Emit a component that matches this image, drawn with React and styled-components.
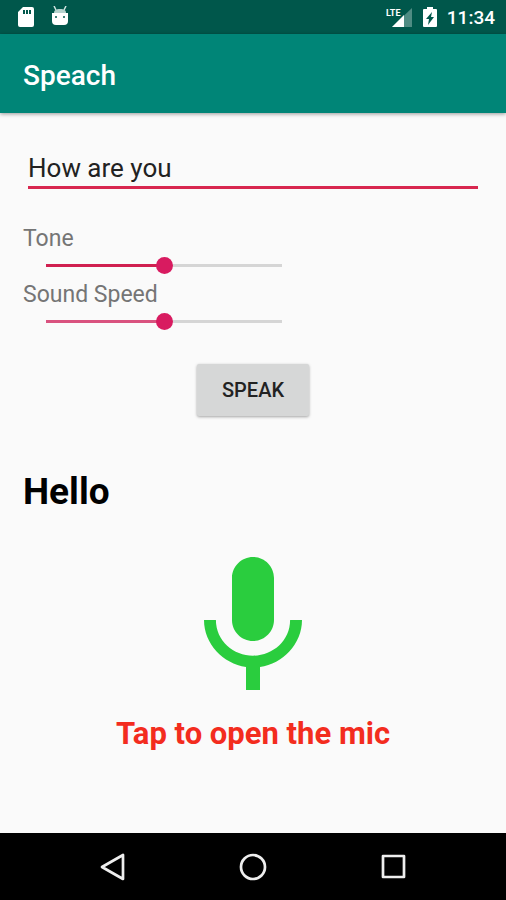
import React, { useState } from "react";
import styled, { createGlobalStyle } from "styled-components";

const GlobalStyle = createGlobalStyle`
  * {
    box-sizing: border-box;
  }

  body {
    margin: 0;
    background-color: #fafafa;
    font-family: Roboto, "Liberation Sans", sans-serif;
  }

  button {
    padding: 0;
    border: none;
    background: none;
    font-family: inherit;
    cursor: pointer;
  }
`;

const Screen = styled.div`
  display: flex;
  flex-direction: column;
  min-height: 100vh;
`;

const StatusBar = styled.div`
  display: flex;
  justify-content: space-between;
  align-items: center;
  height: 34px;
  padding: 0 11px 0 17px;
  background-color: #00574b;
  color: #fff;
`;

const StatusGroup = styled.div`
  display: flex;
  align-items: center;
  gap: ${({ $gap }) => $gap}px;
`;

const Clock = styled.time`
  font-size: 19px;
  line-height: 24px;
  font-weight: 500;
  padding-top: 2px;
`;

const AppBar = styled.header`
  display: flex;
  align-items: center;
  height: 79px;
  padding: 4px 23px 0;
  background-color: #008577;
  box-shadow: 0 1px 4px rgba(0, 0, 0, 0.4);
`;

const Title = styled.h1`
  margin: 0;
  color: #fff;
  font-size: 28px;
  line-height: 32px;
  font-weight: 500;
`;

const Content = styled.main`
  display: flex;
  flex-direction: column;
  flex: 1;
  padding: 36px 23px 24px;
`;

const PhraseInput = styled.input`
  height: 40px;
  margin: 0 5px 36px;
  padding: 0;
  border: none;
  border-bottom: 3px solid #d8274f;
  border-radius: 0;
  outline: none;
  background: transparent;
  color: #222;
  font-family: inherit;
  font-size: 26px;
`;

const Sliders = styled.div`
  display: flex;
  flex-direction: column;
  gap: 3px;
`;

const SliderField = styled.div`
  display: flex;
  flex-direction: column;
`;

const SliderLabel = styled.label`
  color: #757575;
  font-size: 23px;
  line-height: 28px;
`;

const Slider = styled.input`
  appearance: none;
  width: 236px;
  height: 25px;
  margin: 0 0 0 23px;
  background: transparent;
  cursor: pointer;

  &::-webkit-slider-runnable-track {
    height: 3px;
    background: linear-gradient(
      to right,
      ${({ $fill }) => $fill} ${({ value }) => value}%,
      #d5d5d5 ${({ value }) => value}%
    );
  }

  &::-webkit-slider-thumb {
    appearance: none;
    width: 17px;
    height: 17px;
    margin-top: -7px;
    border-radius: 50%;
    background-color: #d81b60;
  }
`;

const SpeakButton = styled.button`
  && {
    align-self: center;
    margin-top: 30px;
    padding: 0 25px;
    height: 52px;
    border-radius: 2px;
    background-color: #d6d7d7;
    box-shadow: 0 1px 3px rgba(0, 0, 0, 0.35);
    color: #222;
    font-size: 20px;
    font-weight: 500;
  }
`;

const Result = styled.h2`
  margin: 52px 0 27px;
  font-size: 37px;
  line-height: 48px;
  font-weight: 700;
  color: #000;
`;

const MicButton = styled.button`
  align-self: center;
  display: flex;
  color: #2acd3e;
`;

const Hint = styled.p`
  margin: 5px 0 0;
  color: #f32c1e;
  font-size: 31px;
  line-height: 36px;
  font-weight: 700;
  text-align: center;
`;

const NavBar = styled.nav`
  display: grid;
  grid-template-columns: repeat(3, 1fr);
  height: 67px;
  padding: 0 43px;
  background-color: #000;
`;

const NavButton = styled.button`
  display: flex;
  justify-content: center;
  align-items: center;
`;

const SdCardIcon = () => (
  <svg width="18" height="22" viewBox="0 0 18 22">
    <path
      fill="#fff"
      fillRule="evenodd"
      d="M6 1h9a2 2 0 0 1 2 2v16a2 2 0 0 1-2 2H3a2 2 0 0 1-2-2V6zM6 4v4h2V4zm3 0v4h2V4zm3 0v4h2V4z"
    />
  </svg>
);

const DroidIcon = () => (
  <svg width="18" height="22" viewBox="0 0 18 22">
    <path d="M3 0l2 4M15 0l-2 4" stroke="#cfe3df" strokeWidth="1.5" />
    <path d="M3 7c0-3 2-4 6-4s6 1 6 4z" fill="#b5d2cd" />
    <path d="M1 7h16v8a4 4 0 0 1-4 4H5a4 4 0 0 1-4-4z" fill="#fff" />
    <circle cx="5" cy="11" r="1" fill="#00574b" />
    <circle cx="13" cy="11" r="1" fill="#00574b" />
  </svg>
);

const SignalIcon = () => (
  <svg width="27" height="22" viewBox="0 0 27 22">
    <path d="M26 2v19H6z" fill="#4f8c83" />
    <path d="M18 9v12H6z" fill="#fff" />
    <text x="0" y="10" fill="#fff" fontSize="9" fontWeight="700">
      LTE
    </text>
  </svg>
);

const BatteryIcon = () => (
  <svg width="14" height="22" viewBox="0 0 14 22">
    <path
      fill="#fff"
      fillRule="evenodd"
      d="M4 1h6v2h3a1 1 0 0 1 1 1v16a1 1 0 0 1-1 1H1a1 1 0 0 1-1-1V4a1 1 0 0 1 1-1h3zM9 6l-6 7h3l-1 6 6-8H8z"
    />
  </svg>
);

const MicIcon = () => (
  <svg width="168" height="168" viewBox="0 0 24 24" fill="currentColor">
    <path d="M12 14c1.66 0 3-1.34 3-3V5c0-1.66-1.34-3-3-3S9 3.34 9 5v6c0 1.66 1.34 3 3 3zm5.3-3c0 3-2.54 5.1-5.3 5.1S6.7 14 6.7 11H5c0 3.41 2.72 6.23 6 6.72V21h2v-3.28c3.28-.48 6-3.3 6-6.72h-1.7z" />
  </svg>
);

const NavIcon = ({ children }) => (
  <svg
    width="28"
    height="28"
    viewBox="0 0 28 28"
    fill="none"
    stroke="#eee"
    strokeWidth="2.7"
    strokeLinejoin="round"
  >
    {children}
  </svg>
);

const App = () => {
  const [phrase, setPhrase] = useState("How are you");
  const [tone, setTone] = useState(50);
  const [speed, setSpeed] = useState(50);

  return (
    <Screen>
      <GlobalStyle />

      <StatusBar>
        <StatusGroup $gap={16}>
          <SdCardIcon />
          <DroidIcon />
        </StatusGroup>
        <StatusGroup $gap={10}>
          <SignalIcon />
          <BatteryIcon />
          <Clock>11:34</Clock>
        </StatusGroup>
      </StatusBar>

      <AppBar>
        <Title>Speach</Title>
      </AppBar>

      <Content>
        <PhraseInput
          type="text"
          aria-label="Phrase"
          value={phrase}
          onChange={(e) => setPhrase(e.target.value)}
        />

        <Sliders>
          <SliderField>
            <SliderLabel htmlFor="tone">Tone</SliderLabel>
            <Slider
              type="range"
              id="tone"
              $fill="#d02050"
              value={tone}
              onChange={(e) => setTone(e.target.value)}
            />
          </SliderField>

          <SliderField>
            <SliderLabel htmlFor="speed">Sound Speed</SliderLabel>
            <Slider
              type="range"
              id="speed"
              $fill="#d9527f"
              value={speed}
              onChange={(e) => setSpeed(e.target.value)}
            />
          </SliderField>
        </Sliders>

        <SpeakButton type="button">SPEAK</SpeakButton>

        <Result>Hello</Result>

        <MicButton type="button" aria-label="Open the mic">
          <MicIcon />
        </MicButton>
        <Hint>Tap to open the mic</Hint>
      </Content>

      <NavBar>
        <NavButton type="button" aria-label="Back">
          <NavIcon>
            <path d="M24 2v24L3 14z" />
          </NavIcon>
        </NavButton>
        <NavButton type="button" aria-label="Home">
          <NavIcon>
            <circle cx="14" cy="14" r="12" />
          </NavIcon>
        </NavButton>
        <NavButton type="button" aria-label="Recent apps">
          <NavIcon>
            <rect x="4" y="3" width="21" height="21" />
          </NavIcon>
        </NavButton>
      </NavBar>
    </Screen>
  );
};

export default App;
